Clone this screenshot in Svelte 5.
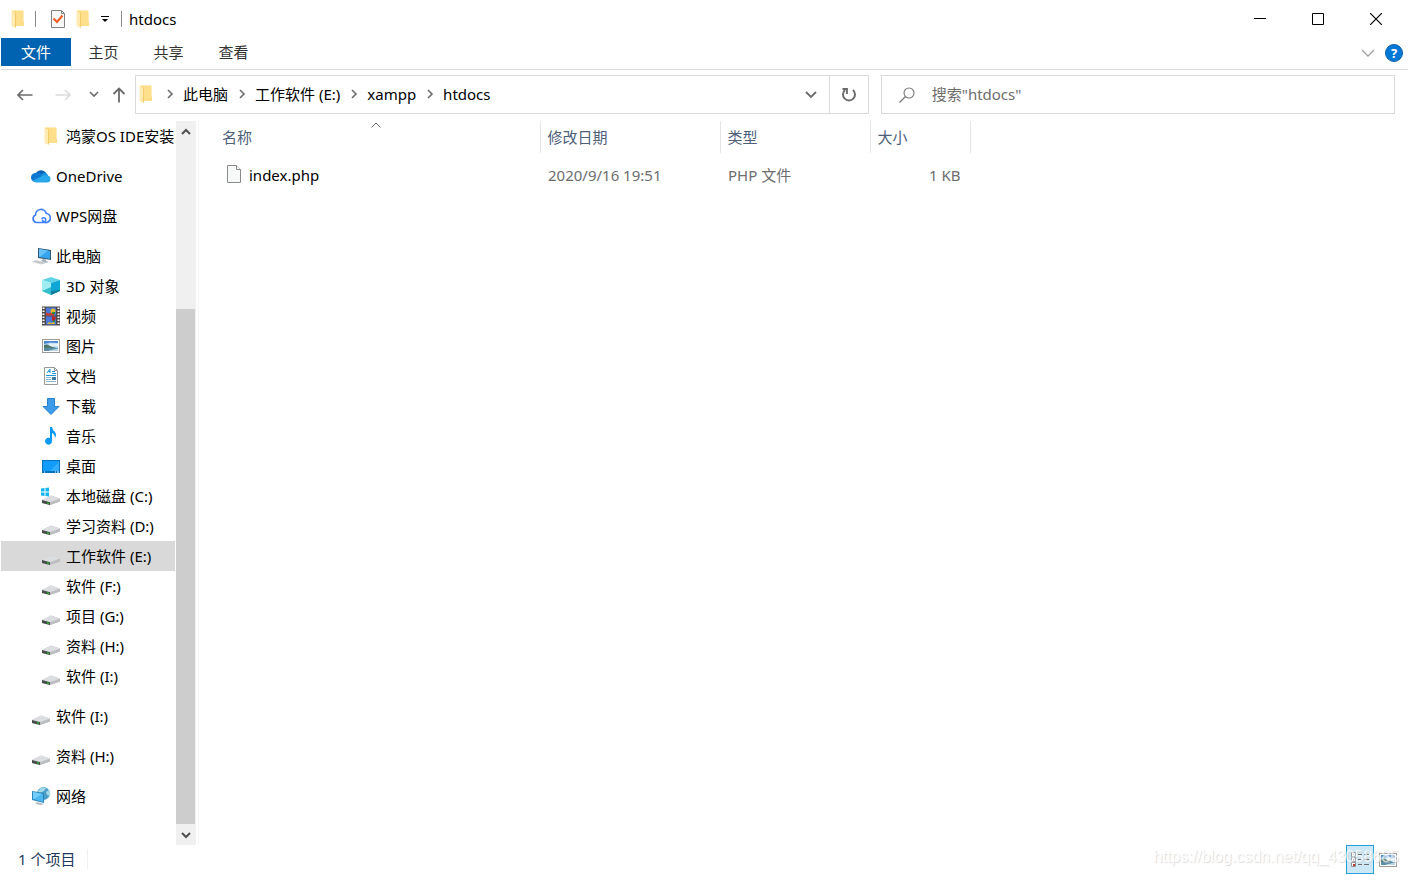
<script lang="ts">
	type Item = { name: string; icon: string; nested?: boolean; spaced?: boolean };

	const items: Item[] = [
		{ name: '鸿蒙OS IDE安装包', icon: 'folder', nested: true },
		{ name: 'OneDrive', icon: 'onedrive', spaced: true },
		{ name: 'WPS网盘', icon: 'wps', spaced: true },
		{ name: '此电脑', icon: 'pc', spaced: true },
		{ name: '3D 对象', icon: 'cube', nested: true },
		{ name: '视频', icon: 'video', nested: true },
		{ name: '图片', icon: 'picture', nested: true },
		{ name: '文档', icon: 'document', nested: true },
		{ name: '下载', icon: 'download', nested: true },
		{ name: '音乐', icon: 'music', nested: true },
		{ name: '桌面', icon: 'desktop', nested: true },
		{ name: '本地磁盘 (C:)', icon: 'system', nested: true },
		{ name: '学习资料 (D:)', icon: 'drive', nested: true },
		{ name: '工作软件 (E:)', icon: 'drive', nested: true },
		{ name: '软件 (F:)', icon: 'drive', nested: true },
		{ name: '项目 (G:)', icon: 'drive', nested: true },
		{ name: '资料 (H:)', icon: 'drive', nested: true },
		{ name: '软件 (I:)', icon: 'drive', nested: true },
		{ name: '软件 (I:)', icon: 'drive', spaced: true },
		{ name: '资料 (H:)', icon: 'drive', spaced: true },
		{ name: '网络', icon: 'network', spaced: true }
	];

	const tabs = ['文件', '主页', '共享', '查看'];
	const crumbs = ['此电脑', '工作软件 (E:)', 'xampp', 'htdocs'];
	const files = [{ name: 'index.php', date: '2020/9/16 19:51', type: 'PHP 文件', size: '1 KB' }];

	let selected = $state(13);
	let activeTab = $state('文件');
	let view = $state('details');
	let query = $state('');
</script>

{#snippet folder()}
	<svg width="20" height="20" viewBox="0 0 20 20">
		<path d="M4 1.500h11q.5 0 .5.500v11l.5.500v3.500H7z" fill="#fbd777" />
		<path d="M8 2h7v11l.5 1v3H8z" fill="#ffdf8c" />
		<path d="M3.500 1.500L7.500 4v15l-4-2z" fill="#ffeab0" />
		<path d="M7 4l1 .500V18l-1 1z" fill="#f2cc68" />
	</svg>
{/snippet}

{#snippet chevron()}
	<svg width="8" height="10" viewBox="0 0 8 10"><path d="M2 1l4 4-4 4" fill="none" stroke="#6b6b6b" stroke-width="1.6" /></svg>
{/snippet}

{#snippet photo()}
	<rect x="1.5" y="3.5" width="17" height="13" fill="#fff" stroke="#9b9b9b" />
	<path d="M3 5h14v10H3z" fill="#a9d2f2" />
	<path d="M3 5h14v2L9 6.500 3 8z" fill="#4a86d0" />
	<path d="M8 7.500h9v3H8z" fill="#e4f1f9" />
	<path d="M3 9l3-.500 4 2 7 2v.500H3z" fill="#4d7869" />
	<path d="M3 12h14v3H3z" fill="#5c8ba8" />
	<path d="M8 14.500l9-2v2.500H8z" fill="#b9d8e4" />
{/snippet}

{#snippet icon(kind: string)}
	{#if kind === 'folder'}
		{@render folder()}
	{:else}
		<svg width="20" height="20" viewBox="0 0 20 20">
			{#if kind === 'onedrive'}
				<path d="M5 7a6 6 0 0 1 10 0l-3 5z" fill="#0864b8" />
				<path d="M5 7q4-1 7 3l-8 6a4.500 4.500 0 0 1 1-9z" fill="#0d78d2" />
				<path d="M10 9q2-3 5-2 2 1 2 3l-5 2z" fill="#1490df" />
				<path d="M2 14.500l8-4q3-2 6-1a3.500 3.500 0 0 1 0 7H5q-2 0-3-2z" fill="#28a8ea" />
			{:else if kind === 'wps'}
				<path d="M12 16.500H5a4 4 0 0 1-.5-7.500 5.500 5.500 0 0 1 10.800-1.500A4.600 4.600 0 0 1 16 16.500q-3 .5-4.500-2" fill="none" stroke="#417ff9" stroke-width="1.700" stroke-linecap="round" stroke-linejoin="round" />
				<path d="M11 12.500a2.200 2.200 0 1 1 2.500 3.500" fill="none" stroke="#417ff9" stroke-width="1.500" stroke-linecap="round" />
			{:else if kind === 'pc'}
				<path d="M7 2l13 2v10L7 12z" fill="#31566d" />
				<path d="M8 3l11 2v8L8 11z" fill="#35a5ef" />
				<path d="M8 3l9 1.600L9 11l-1-.2z" fill="#67c2fa" />
				<path d="M12 13l3 .5v1.500l3 1-3 1-5-2z" fill="#a8b1b8" />
				<path d="M5 14l10 3-5 1.500-10-3z" fill="#d5d8da" />
				<path d="M3 15.500l9 2M5 15l9 2" stroke="#b5babd" stroke-width=".6" />
			{:else if kind === 'cube'}
				<path d="M10 1l9 3-9 3-9-3z" fill="#62d3e4" />
				<path d="M1 4l9 3v12l-9-4z" fill="#a0edf1" />
				<path d="M10 7l9-3v11l-9 4z" fill="#0fa6d6" />
				<path d="M1 15l9-4v8z" fill="#35bdcd" />
				<path d="M10 15l9-1v1l-9 4z" fill="#117e98" />
			{:else if kind === 'video'}
				<path d="M1 .500h18v19H1z" fill="#4d4948" />
				<path d="M5 1.500h10v8H5zM5 10.500h10v8H5z" fill="#4a78d8" />
				<path d="M2.500 1.500v18M17.500 1.500v18" stroke="#fff" stroke-width="2" stroke-dasharray="1.500 1.500" />
				<path d="M5 6.500l3 1 2-1 3 1v2H5z" fill="#cd3b2b" />
				<circle cx="12" cy="5" r="2.500" fill="#e5b82b" />
				<path d="M11 6h3v2h-3zM12 14h2v2h-2z" fill="#278d37" />
				<path d="M11 10l4 1-1 3-3 1z" fill="#b92524" />
				<path d="M6 18l2-2 2 1 3-1 1 2z" fill="#dfb935" />
			{:else if kind === 'picture'}
				{@render photo()}
			{:else if kind === 'document'}
				<path d="M3.500 1.500h10l3 3v14h-13z" fill="#fff" stroke="#999" />
				<path d="M13.500 1.500v3h3" fill="none" stroke="#999" />
				<path d="M6 7l3-4v4M7 5.500h2M11 5.500h3M11 7.500h4M5 9.500h10" fill="none" stroke="#1c93dc" />
				<path d="M5 11.500h5M5 13.500h5M5 15.500h10" stroke="#83b6d2" />
				<path d="M11 11h4v3h-4z" fill="#397da8" />
			{:else if kind === 'download'}
				<path d="M6.500 2.500h7v8h4.500l-8 8-8-8h4.500z" fill="#3d9be9" stroke="#2982cd" />
			{:else if kind === 'music'}
				<path d="M9 1h2q.5 3 3 5 2 3 0 6-.2-4-3-5v8a3.500 3.500 0 1 1-2-3z" fill="#0a99f4" />
			{:else if kind === 'desktop'}
				<path d="M1 4h18v13H1z" fill="#0672bb" />
				<path d="M2 5h16v10H2z" fill="#119cfb" />
				<path d="M9 15l9-9v9z" fill="#33adff" />
				<path d="M3 16h1M14 16h1M16 16h2" stroke="#fff" />
			{:else if kind === 'drive' || kind === 'system'}
				<path d="M1 14l9-4.500 9 3v3L9 19l-8-2z" fill="#c6c7c9" />
				<path d="M1 14l9-4.500 9 3-10 4z" fill="#dcdde0" />
				<path d="M9 16.200l10-3.500v2.800L9 19z" fill="#bcbdc0" />
				<path d="M1 14l8 2.200V19l-8-2z" fill="#474b4a" />
				<path d="M6 16.200l2 .5v1.300l-2-.5z" fill="#25c429" />
				{#if kind === 'system'}
					<path d="M0 2.500L3.500 2v3.500H0zM4.500 2L8 1.500v4H4.500zM0 6.500h3.500V10L0 9.500zM4.500 6.500H8v4L4.500 10z" fill="#13b5ec" />
				{/if}
			{:else}
				<circle cx="12.500" cy="7.500" r="6.500" fill="#4b9dc6" />
				<path d="M9 2.500q4-2 6 0l-2 2.500-4 2-2-1zM15 6l3-2q2 3 1 6l-3-1z" fill="#a4d9e8" />
				<path d="M1 5l12 2v10L1 14z" fill="#2987bf" />
				<path d="M2 6l10 2v8L2 13z" fill="#4cb7ee" />
				<path d="M2 6l9 2-8 5-1-.3z" fill="#75cdf9" />
				<path d="M6 16l4 1 3 1-3 1-6-1z" fill="#b5bec3" />
			{/if}
		</svg>
	{/if}
{/snippet}

<div class="window">
	<header class="titlebar">
		<button class="quick" aria-label="htdocs">{@render folder()}</button>
		<span class="divider first"></span>
		<button class="quick props" aria-label="属性">
			<svg width="20" height="20" viewBox="0 0 20 20">
				<path d="M3.500 1.500h10l3 3v14h-13z" fill="#f8f8f8" stroke="#828282" />
				<path d="M13.500 1.500v3h3" fill="none" stroke="#828282" />
				<path d="M5.500 9.500l3.500 3.500 5.500-6.500" fill="none" stroke="#f05a20" stroke-width="2" />
			</svg>
		</button>
		<button class="quick" aria-label="新建文件夹">{@render folder()}</button>
		<button class="quick more" aria-label="自定义快速访问工具栏">
			<svg width="8" height="8" viewBox="0 0 8 8"><path d="M0 1.500h8" stroke="#000" /><path d="M1 4h6L4 7z" /></svg>
		</button>
		<span class="divider"></span>
		<h1>htdocs</h1>
		<div class="controls">
			<button aria-label="最小化"><svg width="12" height="12" viewBox="0 0 12 12"><path d="M0 5.500h12" stroke="#000" /></svg></button>
			<button aria-label="最大化"><svg width="12" height="12" viewBox="0 0 12 12"><path d="M.5.500h11v11H.5z" fill="none" stroke="#000" /></svg></button>
			<button aria-label="关闭"><svg width="12" height="12" viewBox="0 0 12 12"><path d="M0 0l12 12M12 0L0 12" stroke="#000" stroke-width="1.200" /></svg></button>
		</div>
	</header>

	<nav class="tabs">
		{#each tabs as tab}
			<button class="tab" class:active={activeTab === tab} onclick={() => (activeTab = tab)}>{tab}</button>
		{/each}
		<div class="ribbon-end">
			<button aria-label="展开功能区"><svg width="14" height="8" viewBox="0 0 14 8"><path d="M1 1l6 6 6-6" fill="none" stroke="#a0a0a0" stroke-width="1.300" /></svg></button>
			<button class="help" aria-label="帮助">?</button>
		</div>
	</nav>

	<div class="toolbar">
		<div class="history">
			<button class="arrow" aria-label="后退"><svg width="16" height="12" viewBox="0 0 16 12"><path d="M15.500 6H1M6 1L1 6l5 5" fill="none" stroke="#6b6b6b" stroke-width="1.600" /></svg></button>
			<button class="arrow" aria-label="前进" disabled><svg width="16" height="12" viewBox="0 0 16 12"><path d="M.5 6H15M10 1l5 5-5 5" fill="none" stroke="#dcdcdc" stroke-width="1.600" /></svg></button>
			<button class="recent" aria-label="最近浏览的位置"><svg width="10" height="7" viewBox="0 0 10 7"><path d="M1 1l4 4 4-4" fill="none" stroke="#6b6b6b" stroke-width="1.600" /></svg></button>
			<button class="up" aria-label="上移"><svg width="14" height="16" viewBox="0 0 14 16"><path d="M7 15.500V1M1.500 7L7 1.500 12.500 7" fill="none" stroke="#6b6b6b" stroke-width="1.800" /></svg></button>
		</div>
		<div class="address">
			<div class="crumbs">
				{@render folder()}
				{#each crumbs as crumb}
					<span class="sep">{@render chevron()}</span>
					<button>{crumb}</button>
				{/each}
			</div>
			<button class="drop" aria-label="以前的位置"><svg width="12" height="8" viewBox="0 0 12 8"><path d="M1 1l5 5 5-5" fill="none" stroke="#6b6b6b" stroke-width="1.800" /></svg></button>
			<button class="refresh" aria-label="刷新">
				<svg width="16" height="16" viewBox="0 0 16 16"><path d="M12 3a6 6 0 1 1-8 0" fill="none" stroke="#6b6b6b" stroke-width="2" /><path d="M1.500 2H6v5" fill="none" stroke="#6b6b6b" stroke-width="1.800" /></svg>
			</button>
		</div>
		<div class="search">
			<label for="search" aria-label="搜索">
				<svg width="16" height="16" viewBox="0 0 16 16"><circle cx="10" cy="6" r="5" fill="none" stroke="#777" stroke-width="1.100" /><path d="M6.500 9.500L.5 15.500" stroke="#777" stroke-width="1.300" /></svg>
			</label>
			<input id="search" type="text" placeholder={'搜索"htdocs"'} bind:value={query} />
		</div>
	</div>

	<div class="body">
		<aside>
			<ul>
				{#each items as item, i}
					<li class:spaced={item.spaced}>
						<button class:nested={item.nested} class:selected={selected === i} onclick={() => (selected = i)}>
							{@render icon(item.icon)}
							<span>{item.name}</span>
						</button>
					</li>
				{/each}
			</ul>
			<div class="scrollbar">
				<button aria-label="向上滚动"><svg width="12" height="8" viewBox="0 0 12 8"><path d="M2 6l4-4 4 4" fill="none" stroke="#505050" stroke-width="2" /></svg></button>
				<div class="track"><div class="thumb"></div></div>
				<button aria-label="向下滚动"><svg width="12" height="8" viewBox="0 0 12 8"><path d="M2 2l4 4 4-4" fill="none" stroke="#505050" stroke-width="2" /></svg></button>
			</div>
		</aside>

		<main>
			<table>
				<thead>
					<tr>
						<th class="name">
							名称
							<svg class="sort" width="10" height="6" viewBox="0 0 10 6"><path d="M.5 5.500L5 1l4.500 4.500" fill="none" stroke="#666" /></svg>
						</th>
						<th class="date">修改日期</th>
						<th class="type">类型</th>
						<th class="size">大小</th>
					</tr>
				</thead>
				<tbody>
					{#each files as file}
						<tr>
							<td class="name">
								<a href="#{file.name}">
									<svg width="16" height="20" viewBox="0 0 16 20"><path d="M1.500.500h9l4 4v13h-13z" fill="#f7f8f8" stroke="#8a8a8a" /><path d="M10.500.500v4h4" fill="#fff" stroke="#8a8a8a" /></svg>
									{file.name}
								</a>
							</td>
							<td>{file.date}</td>
							<td>{file.type}</td>
							<td class="size">{file.size}</td>
						</tr>
					{/each}
				</tbody>
			</table>
		</main>
	</div>

	<footer>
		<span class="count">1 个项目</span>
		<div class="views">
			<button class:active={view === 'details'} aria-label="详细信息" onclick={() => (view = 'details')}>
				<svg width="20" height="20" viewBox="0 0 20 20">
					<path d="M1.500 2.500h4v4h-4zM1.500 7.500h4v4h-4zM1.500 12.500h4v4h-4z" fill="#fff" stroke="#929292" />
					<path d="M3 4h1v1H3z" fill="#4d9a7a" /><path d="M3 9h1v1H3z" fill="#4979b5" /><path d="M3 14h2v2H3z" fill="#c23426" />
					<path d="M8 4.500h4M14 4.500h5M8 9.500h4M14 9.500h5M8 14.500h4M14 14.500h5" stroke="#6c6c6c" />
				</svg>
			</button>
			<button class:active={view === 'large'} aria-label="大图标" onclick={() => (view = 'large')}>
				<svg width="20" height="20" viewBox="0 0 20 20">{@render photo()}</svg>
			</button>
		</div>
		<span class="watermark">https://blog.csdn.net/qq_43058685</span>
	</footer>
</div>

<style>
	:global(body) { margin: 0; background: #fff; }

	.window {
		display: flex; flex-direction: column;
		min-height: 100vh; box-sizing: border-box; padding-left: 1px;
		font-family: "Noto Sans", "Noto Sans CJK SC", sans-serif;
		font-size: 15px; line-height: 20px; color: #000;
	}

	button {
		display: flex; align-items: center; justify-content: center;
		padding: 0; border: none; background: transparent;
		font: inherit; color: inherit; white-space: nowrap;
	}
	svg { display: block; flex-shrink: 0; }

	.titlebar { display: flex; align-items: center; height: 38px; padding-left: 7px; }
	.quick { width: 20px; height: 20px; }
	.quick.props { margin-right: 5px; }
	.quick.more { width: 24px; }
	.divider { width: 1px; height: 16px; margin-left: 4px; background: #8a8a8a; }
	.divider.first { margin: 0 12px 0 7px; }
	h1 { margin: 0 0 0 7px; font-size: 15px; font-weight: 400; }
	.controls { display: flex; align-self: stretch; margin-left: auto; padding-right: 3px; }
	.controls button { width: 58px; }

	.tabs { display: flex; height: 31px; border-bottom: 1px solid #dadbdc; color: #333; }
	.tab { width: 65px; height: 28px; }
	.tab:first-child { width: 70px; }
	.tab.active { background: #0063b1; color: #fff; }
	.ribbon-end { display: flex; align-items: center; gap: 10px; margin-left: auto; padding: 0 5px 2px 0; }
	.help {
		width: 18px; height: 18px; border-radius: 50%;
		background: #0078d7; border: 1px solid #1462a5;
		color: #fff; font-size: 13px; font-weight: 700; line-height: 16px;
	}

	.toolbar { display: flex; height: 39px; padding: 5px 13px 7px 0; }
	.history { display: flex; align-items: center; width: 134px; padding-left: 5px; box-sizing: border-box; }
	.arrow { width: 38px; height: 38px; }
	.recent { width: 23px; height: 38px; }
	.up { width: 28px; height: 38px; }
	.address, .search { display: flex; min-width: 0; border: 1px solid #d9d9d9; }
	.address { flex: 10 1 0; margin-right: 12px; }
	.crumbs { display: flex; flex: 1; align-items: center; padding-bottom: 2px; }
	.sep { display: flex; justify-content: center; width: 27px; }
	.drop { width: 36px; }
	.refresh { width: 39px; border-left: 1px solid #d9d9d9; }
	.search { flex: 7 1 0; align-items: center; }
	.search label { padding: 0 17px; }
	.search input {
		flex: 1; min-width: 0; height: 35px; margin-bottom: 2px; padding: 0; border: none; outline: none;
		font: inherit; color: #000; background: transparent;
	}
	.search input::placeholder { color: #6d6d6d; opacity: 1; }

	.body { display: flex; flex: 1; }
	aside { display: flex; width: 198px; box-sizing: border-box; border-right: 1px solid #f5f5f5; }
	ul { flex: 1; min-width: 0; margin: 0; padding: 0 1px 0 0; list-style: none; }
	li.spaced { margin-top: 10px; }
	li button {
		justify-content: flex-start; gap: 5px;
		width: 100%; height: 30px; padding-left: 30px; overflow: hidden;
	}
	li button.nested { padding-left: 40px; }
	li button.selected { background: #d9d9d9; }
	.scrollbar { display: flex; flex-direction: column; width: 20px; margin-right: 2px; background: #f0f0f0; }
	.scrollbar button { width: 19px; height: 21px; }
	.track { display: flex; flex: 1; flex-direction: column; justify-content: flex-end; }
	.thumb { height: 75.5%; margin-right: 1px; background: #cdcdcd; }

	main { flex: 1; min-width: 0; padding-left: 11px; }
	table { width: 761px; table-layout: fixed; border-collapse: collapse; }
	th {
		position: relative; height: 32px; padding: 0 7px; box-sizing: border-box;
		border-right: 1px solid #e5e5e5; text-align: left; font-weight: 400; color: #4c607a;
	}
	th.name { width: 330px; padding-left: 12px; }
	th.date { width: 180px; }
	th.type { width: 150px; }
	.sort { position: absolute; top: 1px; left: 49%; }
	td { height: 44px; padding: 0 8px; color: #6d6d6d; }
	td.name { padding-left: 16px; }
	td.name a { display: flex; align-items: center; gap: 7px; color: #000; text-decoration: none; }
	td.size { padding-right: 10px; text-align: right; }

	footer { position: relative; display: flex; align-items: flex-start; height: 30px; padding-left: 17px; color: #1e395b; }
	.count { margin-top: 4px; padding-right: 12px; border-right: 1px solid #f0f0f0; }
	.views { display: flex; margin-left: auto; padding-right: 6px; }
	.views button { width: 28px; height: 29px; }
	.views button.active { box-sizing: border-box; border: 1px solid #26a0da; background: #cce8f6; }
	.watermark {
		position: absolute; top: 2px; right: 9px;
		font-family: "Liberation Sans", sans-serif; font-size: 16px;
		color: #fff; text-shadow: 1px 1px 1px #ccc; opacity: .7; pointer-events: none;
	}
</style>
